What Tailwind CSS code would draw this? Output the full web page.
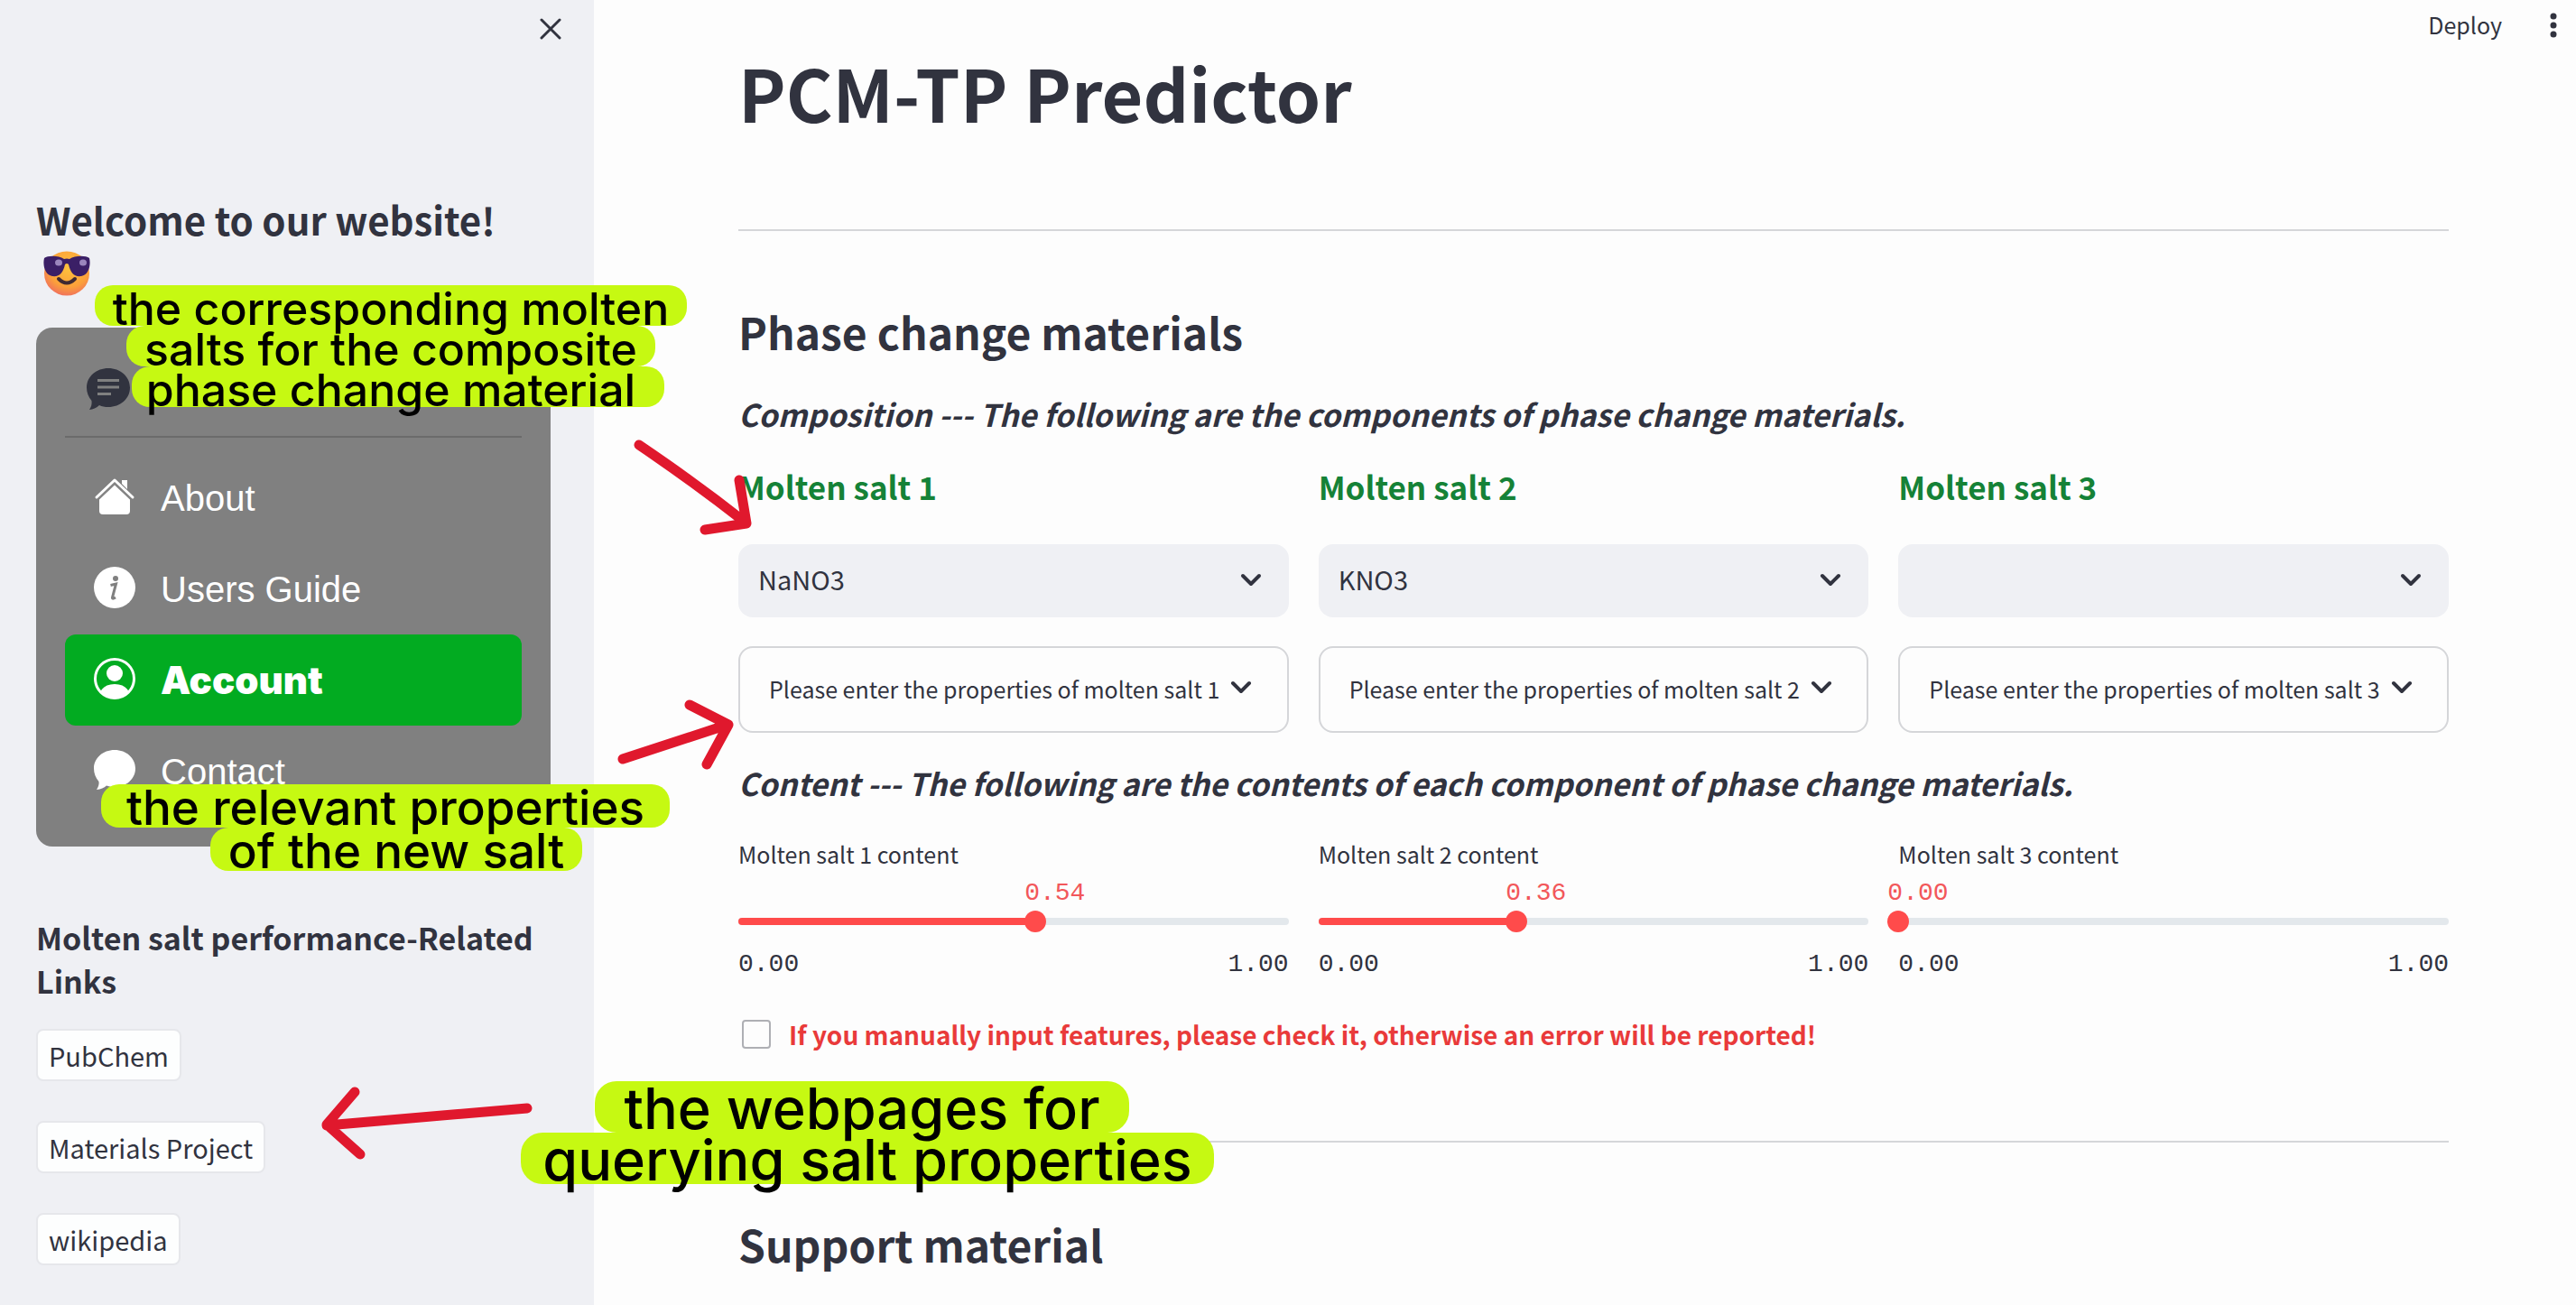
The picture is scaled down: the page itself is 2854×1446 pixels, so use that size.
<!DOCTYPE html>
<html lang="en">
<head>
<meta charset="utf-8">
<meta name="viewport" content="width=device-width, initial-scale=1">
<title>PCM-TP Predictor</title>
<script src="https://cdn.jsdelivr.net/npm/@tailwindcss/browser@4"></script>
</head>
<body class="relative flex min-h-screen overflow-x-hidden bg-[#fdfdfd] font-['Noto_Sans_CJK_SC',sans-serif] text-[#31333f]">

<!-- Sidebar -->
<aside class="w-[658px] shrink-0 bg-[#eff0f4] pl-10 pr-12 pb-4">
  <div class="flex h-[214px] justify-end pt-5 -mr-3">
    <button type="button" aria-label="Close sidebar" class="size-6">
      <svg viewBox="0 0 24 24" class="size-6" fill="none" stroke="#31333f" stroke-width="3" stroke-linecap="round"><path d="M2 2l20 20M22 2L2 22"/></svg>
    </button>
  </div>

  <h2 class="text-[42px] leading-[58px] font-semibold">Welcome to our website!
    <svg viewBox="0 0 52 50" class="mt-1.5 ml-2 h-[50px] w-[52px]" role="img" aria-label="Smiling face with sunglasses">
      <defs><radialGradient id="face" cx="55%" cy="35%" r="70%"><stop offset="0" stop-color="#ffc43d"/><stop offset=".65" stop-color="#fba03a"/><stop offset="1" stop-color="#ef6a62"/></radialGradient></defs>
      <ellipse cx="26" cy="25" rx="25" ry="24.500" fill="url(#face)"/>
      <path d="M1 8C5 5 17 5 23 9q3-1 6 0c6-4 18-4 22-1 2 8-1 19-9 20-8 1-12-4-14-13q-2-2-4 0C22 24 18 29 10 28 2 27-1 16 1 8z" fill="#3b1f66"/>
      <ellipse cx="17" cy="13" rx="4" ry="3.500" fill="#9b86bd"/><ellipse cx="44" cy="13" rx="4" ry="3.500" fill="#9b86bd"/>
      <path d="M17 31q9 9 18 0" fill="none" stroke="#402b32" stroke-width="4" stroke-linecap="round"/>
    </svg>
  </h2>

  <nav aria-label="Main" class="mt-[35px] rounded-[18px] bg-[#808080] px-8 pt-[45px] pb-[33px] font-['Liberation_Sans',Arial,sans-serif] text-[40px] text-white">
    <svg viewBox="0 0 48 46" class="ml-6 h-[46px] w-12" aria-hidden="true">
      <path d="M24 0C37 0 48 9 48 21.500S37 43 24 43c-4 0-7-.600-10-2-3 3-7 4.600-11 5 2-3 3-6 2.500-10C2 32 0 27 0 21.500 0 9 11 0 24 0z" fill="#31333f"/>
      <path d="M12 13.500h24M12 21h24M12 28.500h15" stroke="#808080" stroke-width="3"/>
    </svg>
    <hr class="mt-[29px] mb-4 border-t-2 border-[#6b6b6b]">
    <a href="#about" class="flex h-[101px] items-center gap-7 rounded-xl pl-8">
      <svg viewBox="0 0 46 42" class="mb-1 h-[42px] w-[46px]" fill="#fff" aria-hidden="true"><path d="M23 7L6 23v14q0 4 4 4h26q4 0 4-4V23z"/><path d="M31 3h6v10l-6-6z"/><path d="M3 22L23 3l20 19" fill="none" stroke="#fff" stroke-width="3" stroke-linecap="round" stroke-linejoin="round"/><path d="M5 24.500L23 7.500l18 17" fill="none" stroke="#808080" stroke-width="1.500"/></svg>
      About
    </a>
    <a href="#guide" class="flex h-[101px] items-center gap-7 rounded-xl pl-8">
      <svg viewBox="0 0 46 46" class="mb-1 size-[46px]" aria-hidden="true"><circle cx="23" cy="23" r="23" fill="#fff"/><circle cx="24" cy="13" r="3" fill="#808080"/><path d="M18.500 20.500l6-1.500-4 15q-.500 2.500 3.500 0" fill="none" stroke="#808080" stroke-width="3"/></svg>
      Users Guide
    </a>
    <a href="#account" aria-current="page" class="flex h-[101px] items-center gap-7 rounded-xl bg-[#02ab21] pl-8 font-['Inter',sans-serif] text-[42px] font-black">
      <svg viewBox="0 0 46 46" class="mb-1 size-[46px]" aria-hidden="true"><circle cx="23" cy="23" r="21.500" fill="none" stroke="#fff" stroke-width="3"/><circle cx="23" cy="17" r="9" fill="#fff"/><path d="M7 38q4-9 16-9t16 9q-7 7-16 7T7 38z" fill="#fff"/></svg>
      Account
    </a>
    <a href="#contact" class="flex h-[101px] items-center gap-7 rounded-xl pl-8">
      <svg viewBox="0 0 46 44" class="mb-1 h-11 w-[46px]" aria-hidden="true"><path d="M23 0c13 0 23 9 23 20.500S36 41 23 41c-3 0-6-.500-9-1.500-3 2.500-6 4-11 4.500 2-3 3-6 2.500-9C2 31 0 26 0 20.500 0 9 10 0 23 0z" fill="#fff"/></svg>
      Contact
    </a>
  </nav>

  <h3 class="mt-[77px] text-[34px] leading-[48px] font-semibold">Molten salt performance-Related Links</h3>
  <div class="mt-[29px] flex flex-col items-start gap-11 text-[29px] leading-[54px]">
    <a href="#pubchem" class="rounded-lg border-2 border-[#e6e7eb] bg-[#fdfefe] px-3">PubChem</a>
    <a href="#materials-project" class="rounded-lg border-2 border-[#e6e7eb] bg-[#fdfefe] px-3">Materials Project</a>
    <a href="#wikipedia" class="rounded-lg border-2 border-[#e6e7eb] bg-[#fdfefe] px-3">wikipedia</a>
  </div>
</aside>

<!-- Main column -->
<div class="min-w-0 flex-1">
  <header class="flex h-[62px] justify-end gap-12 pr-4 text-[25px]">
    <button type="button" class="h-14">Deploy</button>
    <button type="button" aria-label="Menu" class="h-14">
      <svg viewBox="0 0 18 28" class="h-7 w-[18px]" fill="#31333f"><circle cx="9" cy="4" r="3.500"/><circle cx="9" cy="14" r="3.500"/><circle cx="9" cy="24" r="3.500"/></svg>
    </button>
  </header>

  <main class="pl-40 pr-[141px]">
    <h1 class="text-[79px] leading-[80px] font-bold">PCM-TP Predictor</h1>
    <hr class="mt-28 border-t-2 border-[#d5d6d9]">

    <h2 class="mt-[81px] text-[48px] leading-[60px] font-semibold">Phase change materials</h2>
    <h3 class="mt-10 text-[34px] leading-[44px] font-semibold italic">Composition --- The following are the components of phase change materials.</h3>

    <div class="mt-9 grid grid-cols-3 gap-[33px]">
      <section>
        <label for="salt1" class="block text-[35px] leading-[44px] font-semibold text-[#158237]">Molten salt 1</label>
        <div class="relative mt-[42px]">
          <select id="salt1" class="h-[81px] w-full appearance-none rounded-2xl bg-[#eff0f4] px-[22px] pb-1 text-[29px]"><option>NaNO3</option><option>KNO3</option></select>
          <svg viewBox="0 0 24 16" class="pointer-events-none absolute top-8 right-[30px] h-4 w-6" fill="none" stroke="#31333f" stroke-width="4" stroke-linecap="round" stroke-linejoin="round"><path d="M3 3l9 9 9-9"/></svg>
        </div>
        <details class="mt-8 rounded-2xl border-2 border-[#d5d6d9]">
          <summary class="flex h-[92px] cursor-pointer list-none items-center gap-3 pl-8 text-[25px]">Please enter the properties of molten salt 1
            <svg viewBox="0 0 24 16" class="mb-1 h-4 w-6" fill="none" stroke="#31333f" stroke-width="4" stroke-linecap="round" stroke-linejoin="round"><path d="M3 3l9 9 9-9"/></svg>
          </summary>
        </details>
      </section>
      <section>
        <label for="salt2" class="block text-[35px] leading-[44px] font-semibold text-[#158237]">Molten salt 2</label>
        <div class="relative mt-[42px]">
          <select id="salt2" class="h-[81px] w-full appearance-none rounded-2xl bg-[#eff0f4] px-[22px] pb-1 text-[29px]"><option>KNO3</option><option>NaNO3</option></select>
          <svg viewBox="0 0 24 16" class="pointer-events-none absolute top-8 right-[30px] h-4 w-6" fill="none" stroke="#31333f" stroke-width="4" stroke-linecap="round" stroke-linejoin="round"><path d="M3 3l9 9 9-9"/></svg>
        </div>
        <details class="mt-8 rounded-2xl border-2 border-[#d5d6d9]">
          <summary class="flex h-[92px] cursor-pointer list-none items-center gap-3 pl-8 text-[25px]">Please enter the properties of molten salt 2
            <svg viewBox="0 0 24 16" class="mb-1 h-4 w-6" fill="none" stroke="#31333f" stroke-width="4" stroke-linecap="round" stroke-linejoin="round"><path d="M3 3l9 9 9-9"/></svg>
          </summary>
        </details>
      </section>
      <section>
        <label for="salt3" class="block text-[35px] leading-[44px] font-semibold text-[#158237]">Molten salt 3</label>
        <div class="relative mt-[42px]">
          <select id="salt3" class="h-[81px] w-full appearance-none rounded-2xl bg-[#eff0f4] px-[22px] pb-1 text-[29px]"><option></option><option>NaNO3</option><option>KNO3</option></select>
          <svg viewBox="0 0 24 16" class="pointer-events-none absolute top-8 right-[30px] h-4 w-6" fill="none" stroke="#31333f" stroke-width="4" stroke-linecap="round" stroke-linejoin="round"><path d="M3 3l9 9 9-9"/></svg>
        </div>
        <details class="mt-8 rounded-2xl border-2 border-[#d5d6d9]">
          <summary class="flex h-[92px] cursor-pointer list-none items-center gap-3 pl-8 text-[25px]">Please enter the properties of molten salt 3
            <svg viewBox="0 0 24 16" class="mb-1 h-4 w-6" fill="none" stroke="#31333f" stroke-width="4" stroke-linecap="round" stroke-linejoin="round"><path d="M3 3l9 9 9-9"/></svg>
          </summary>
        </details>
      </section>
    </div>

    <h3 class="mt-[34px] text-[34px] leading-[44px] font-semibold italic">Content --- The following are the contents of each component of phase change materials.</h3>

    <div class="mt-10 grid grid-cols-3 gap-[33px]">
      <div>
        <label for="content1" class="block text-[25px] leading-8">Molten salt 1 content</label>
        <div class="relative mt-3 h-8 font-['Liberation_Mono',monospace] text-[28px] leading-8 text-[#f2575a]"><output for="content1" class="absolute -ml-3" style="left:54%">0.54</output></div>
        <div class="relative mt-[3px] flex h-6 items-center">
          <div class="h-2 w-full overflow-hidden rounded-full bg-[#e3e8ec]"><div class="h-2 bg-[#ff4b4b]" style="width:54%"></div></div>
          <input id="content1" type="range" min="0" max="1" step="0.01" value="0.54" class="absolute -left-3 h-6 w-[calc(100%+24px)] appearance-none bg-transparent [&::-webkit-slider-thumb]:size-6 [&::-webkit-slider-thumb]:appearance-none [&::-webkit-slider-thumb]:rounded-full [&::-webkit-slider-thumb]:bg-[#ff4b4b]">
        </div>
        <div class="mt-5 flex justify-between font-['Liberation_Mono',monospace] text-[28px] leading-8"><span>0.00</span><span>1.00</span></div>
      </div>
      <div>
        <label for="content2" class="block text-[25px] leading-8">Molten salt 2 content</label>
        <div class="relative mt-3 h-8 font-['Liberation_Mono',monospace] text-[28px] leading-8 text-[#f2575a]"><output for="content2" class="absolute -ml-3" style="left:36%">0.36</output></div>
        <div class="relative mt-[3px] flex h-6 items-center">
          <div class="h-2 w-full overflow-hidden rounded-full bg-[#e3e8ec]"><div class="h-2 bg-[#ff4b4b]" style="width:36%"></div></div>
          <input id="content2" type="range" min="0" max="1" step="0.01" value="0.36" class="absolute -left-3 h-6 w-[calc(100%+24px)] appearance-none bg-transparent [&::-webkit-slider-thumb]:size-6 [&::-webkit-slider-thumb]:appearance-none [&::-webkit-slider-thumb]:rounded-full [&::-webkit-slider-thumb]:bg-[#ff4b4b]">
        </div>
        <div class="mt-5 flex justify-between font-['Liberation_Mono',monospace] text-[28px] leading-8"><span>0.00</span><span>1.00</span></div>
      </div>
      <div>
        <label for="content3" class="block text-[25px] leading-8">Molten salt 3 content</label>
        <div class="relative mt-3 h-8 font-['Liberation_Mono',monospace] text-[28px] leading-8 text-[#f2575a]"><output for="content3" class="absolute -ml-3" style="left:0%">0.00</output></div>
        <div class="relative mt-[3px] flex h-6 items-center">
          <div class="h-2 w-full overflow-hidden rounded-full bg-[#e3e8ec]"><div class="h-2 bg-[#ff4b4b]" style="width:0%"></div></div>
          <input id="content3" type="range" min="0" max="1" step="0.01" value="0" class="absolute -left-3 h-6 w-[calc(100%+24px)] appearance-none bg-transparent [&::-webkit-slider-thumb]:size-6 [&::-webkit-slider-thumb]:appearance-none [&::-webkit-slider-thumb]:rounded-full [&::-webkit-slider-thumb]:bg-[#ff4b4b]">
        </div>
        <div class="mt-5 flex justify-between font-['Liberation_Mono',monospace] text-[28px] leading-8"><span>0.00</span><span>1.00</span></div>
      </div>
    </div>

    <label class="mt-[45px] flex h-8 items-center gap-5 pl-1 text-[28px] leading-8 font-semibold text-[#e93a3a]">
      <input type="checkbox" class="size-8 appearance-none rounded border-2 border-[#aeafb4] bg-[#fdfdfd]">
      If you manually input features, please check it, otherwise an error will be reported!
    </label>
    <hr class="mt-[102px] border-t-2 border-[#d5d6d9]">
    <h2 class="mt-[82px] text-[48px] leading-[60px] font-semibold">Support material</h2>
  </main>
</div>

<!-- Callout: salt selection -->
<p class="absolute top-[316px] left-[103px] flex w-[660px] flex-col items-center font-['Inter',sans-serif] text-[50px] leading-[45px] font-medium text-black">
  <span class="h-[45px] rounded-[20px] bg-[#c6f912] px-5 pt-1 whitespace-nowrap"><span class="relative z-10">the corresponding molten</span></span>
  <span class="h-[45px] rounded-[20px] bg-[#c6f912] px-5 pt-1 whitespace-nowrap"><span class="relative z-10">salts for the composite</span></span>
  <span class="ml-4 h-[45px] rounded-[20px] bg-[#c6f912] pr-8 pl-4 pt-1 whitespace-nowrap"><span class="relative z-10">phase change material</span></span>
</p>
<svg viewBox="0 0 140 120" class="absolute top-[480px] left-[700px] h-[120px] w-[140px]" fill="none" stroke="#e0182d" stroke-width="11" stroke-linecap="round" stroke-linejoin="round" aria-hidden="true"><path d="M8 13Q70 55 126 99M119 52l8 48-46 7"/></svg>

<!-- Callout: salt properties -->
<p class="absolute top-[869px] left-[113px] flex w-[628px] flex-col items-center font-['Inter',sans-serif] text-[53px] leading-[48px] font-medium text-black">
  <span class="h-12 rounded-[20px] bg-[#c6f912] px-7 pt-0.5 whitespace-nowrap"><span class="relative z-10">the relevant properties</span></span>
  <span class="ml-6 h-12 rounded-[20px] bg-[#c6f912] px-5 pt-0.5 whitespace-nowrap"><span class="relative z-10">of the new salt</span></span>
</p>
<svg viewBox="0 0 140 90" class="absolute top-[770px] left-[680px] h-[90px] w-[140px]" fill="none" stroke="#e0182d" stroke-width="11" stroke-linecap="round" stroke-linejoin="round" aria-hidden="true"><path d="M10 71L126 33M84 11l43 22-24 44"/></svg>

<!-- Callout: reference links -->
<p class="absolute top-[1198px] left-[577px] flex w-[768px] flex-col items-center font-['Inter',sans-serif] text-[63px] leading-[57px] font-medium text-black">
  <span class="mr-3 h-[57px] rounded-[24px] bg-[#c6f912] px-8 pt-0.5 whitespace-nowrap"><span class="relative z-10">the webpages for</span></span>
  <span class="h-[57px] rounded-[24px] bg-[#c6f912] px-6 pt-0.5 whitespace-nowrap"><span class="relative z-10">querying salt properties</span></span>
</p>
<svg viewBox="0 0 240 90" class="absolute top-[1200px] left-[352px] h-[90px] w-[240px]" fill="none" stroke="#e0182d" stroke-width="11" stroke-linecap="round" stroke-linejoin="round" aria-hidden="true"><path d="M232 28L10 47M41 10L10 46l37 33"/></svg>
</body>
</html>
